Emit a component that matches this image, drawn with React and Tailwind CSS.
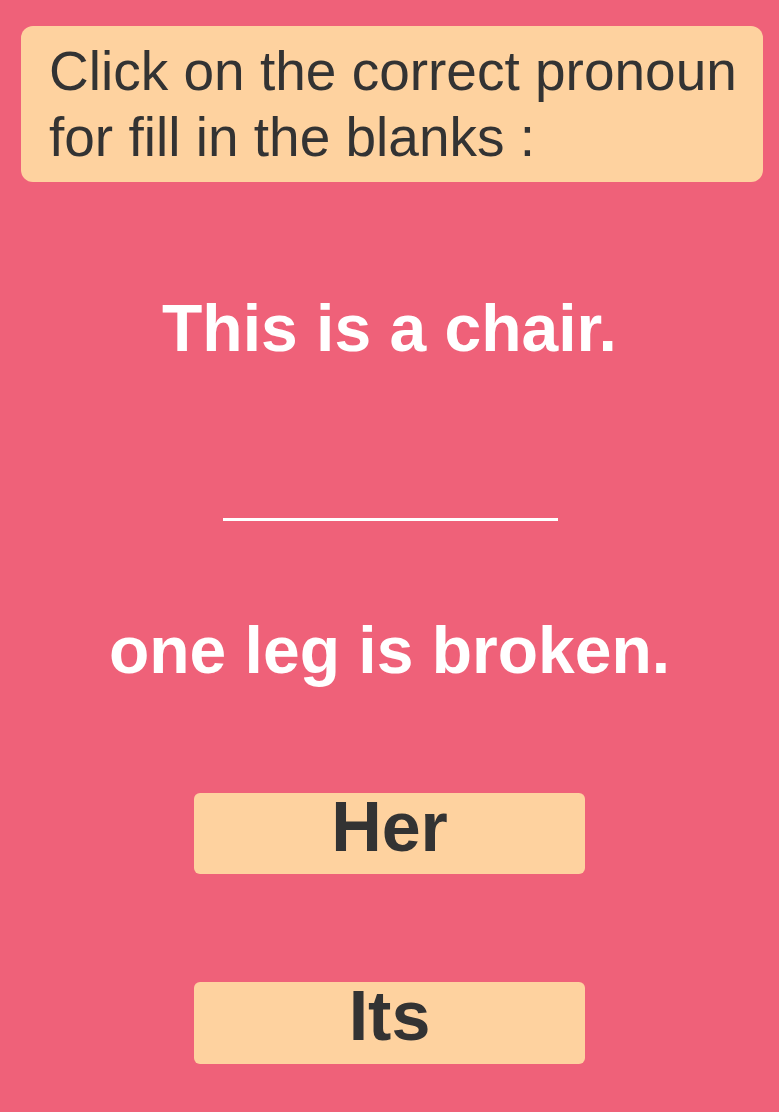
export default function App() {
  return (
    <div className="w-[779px] h-[1112px] bg-[#ef6179] flex flex-col items-center overflow-hidden" style={{ fontFamily: '"Liberation Sans", Arial, sans-serif' }}>
      <div className="mt-[26px] self-start ml-[21px] w-[742px] h-[156px] bg-[#fed29f] rounded-[12px] pl-[28px] pt-[12px] text-[#333333] text-[55px] leading-[66px]">
        Click on the correct pronoun<br />for fill in the blanks :
      </div>
      <div className="mt-[113px] text-white font-bold text-[66px] leading-[66px]">This is a chair.</div>
      <div className="mt-[157px] ml-[2px] w-[335px] h-[3px] bg-white"></div>
      <div className="mt-[96px] text-white font-bold text-[66px] leading-[66px]">one leg is broken.</div>
      <button className="mt-[110px] w-[391px] h-[81px] bg-[#fed29f] rounded-[6px] flex items-center justify-center pb-[14px] text-[#333333] font-bold text-[70px] leading-[70px]">Her</button>
      <button className="mt-[108px] w-[391px] h-[82px] bg-[#fed29f] rounded-[6px] flex items-center justify-center pb-[14px] text-[#333333] font-bold text-[70px] leading-[70px]">Its</button>
    </div>
  );
}
